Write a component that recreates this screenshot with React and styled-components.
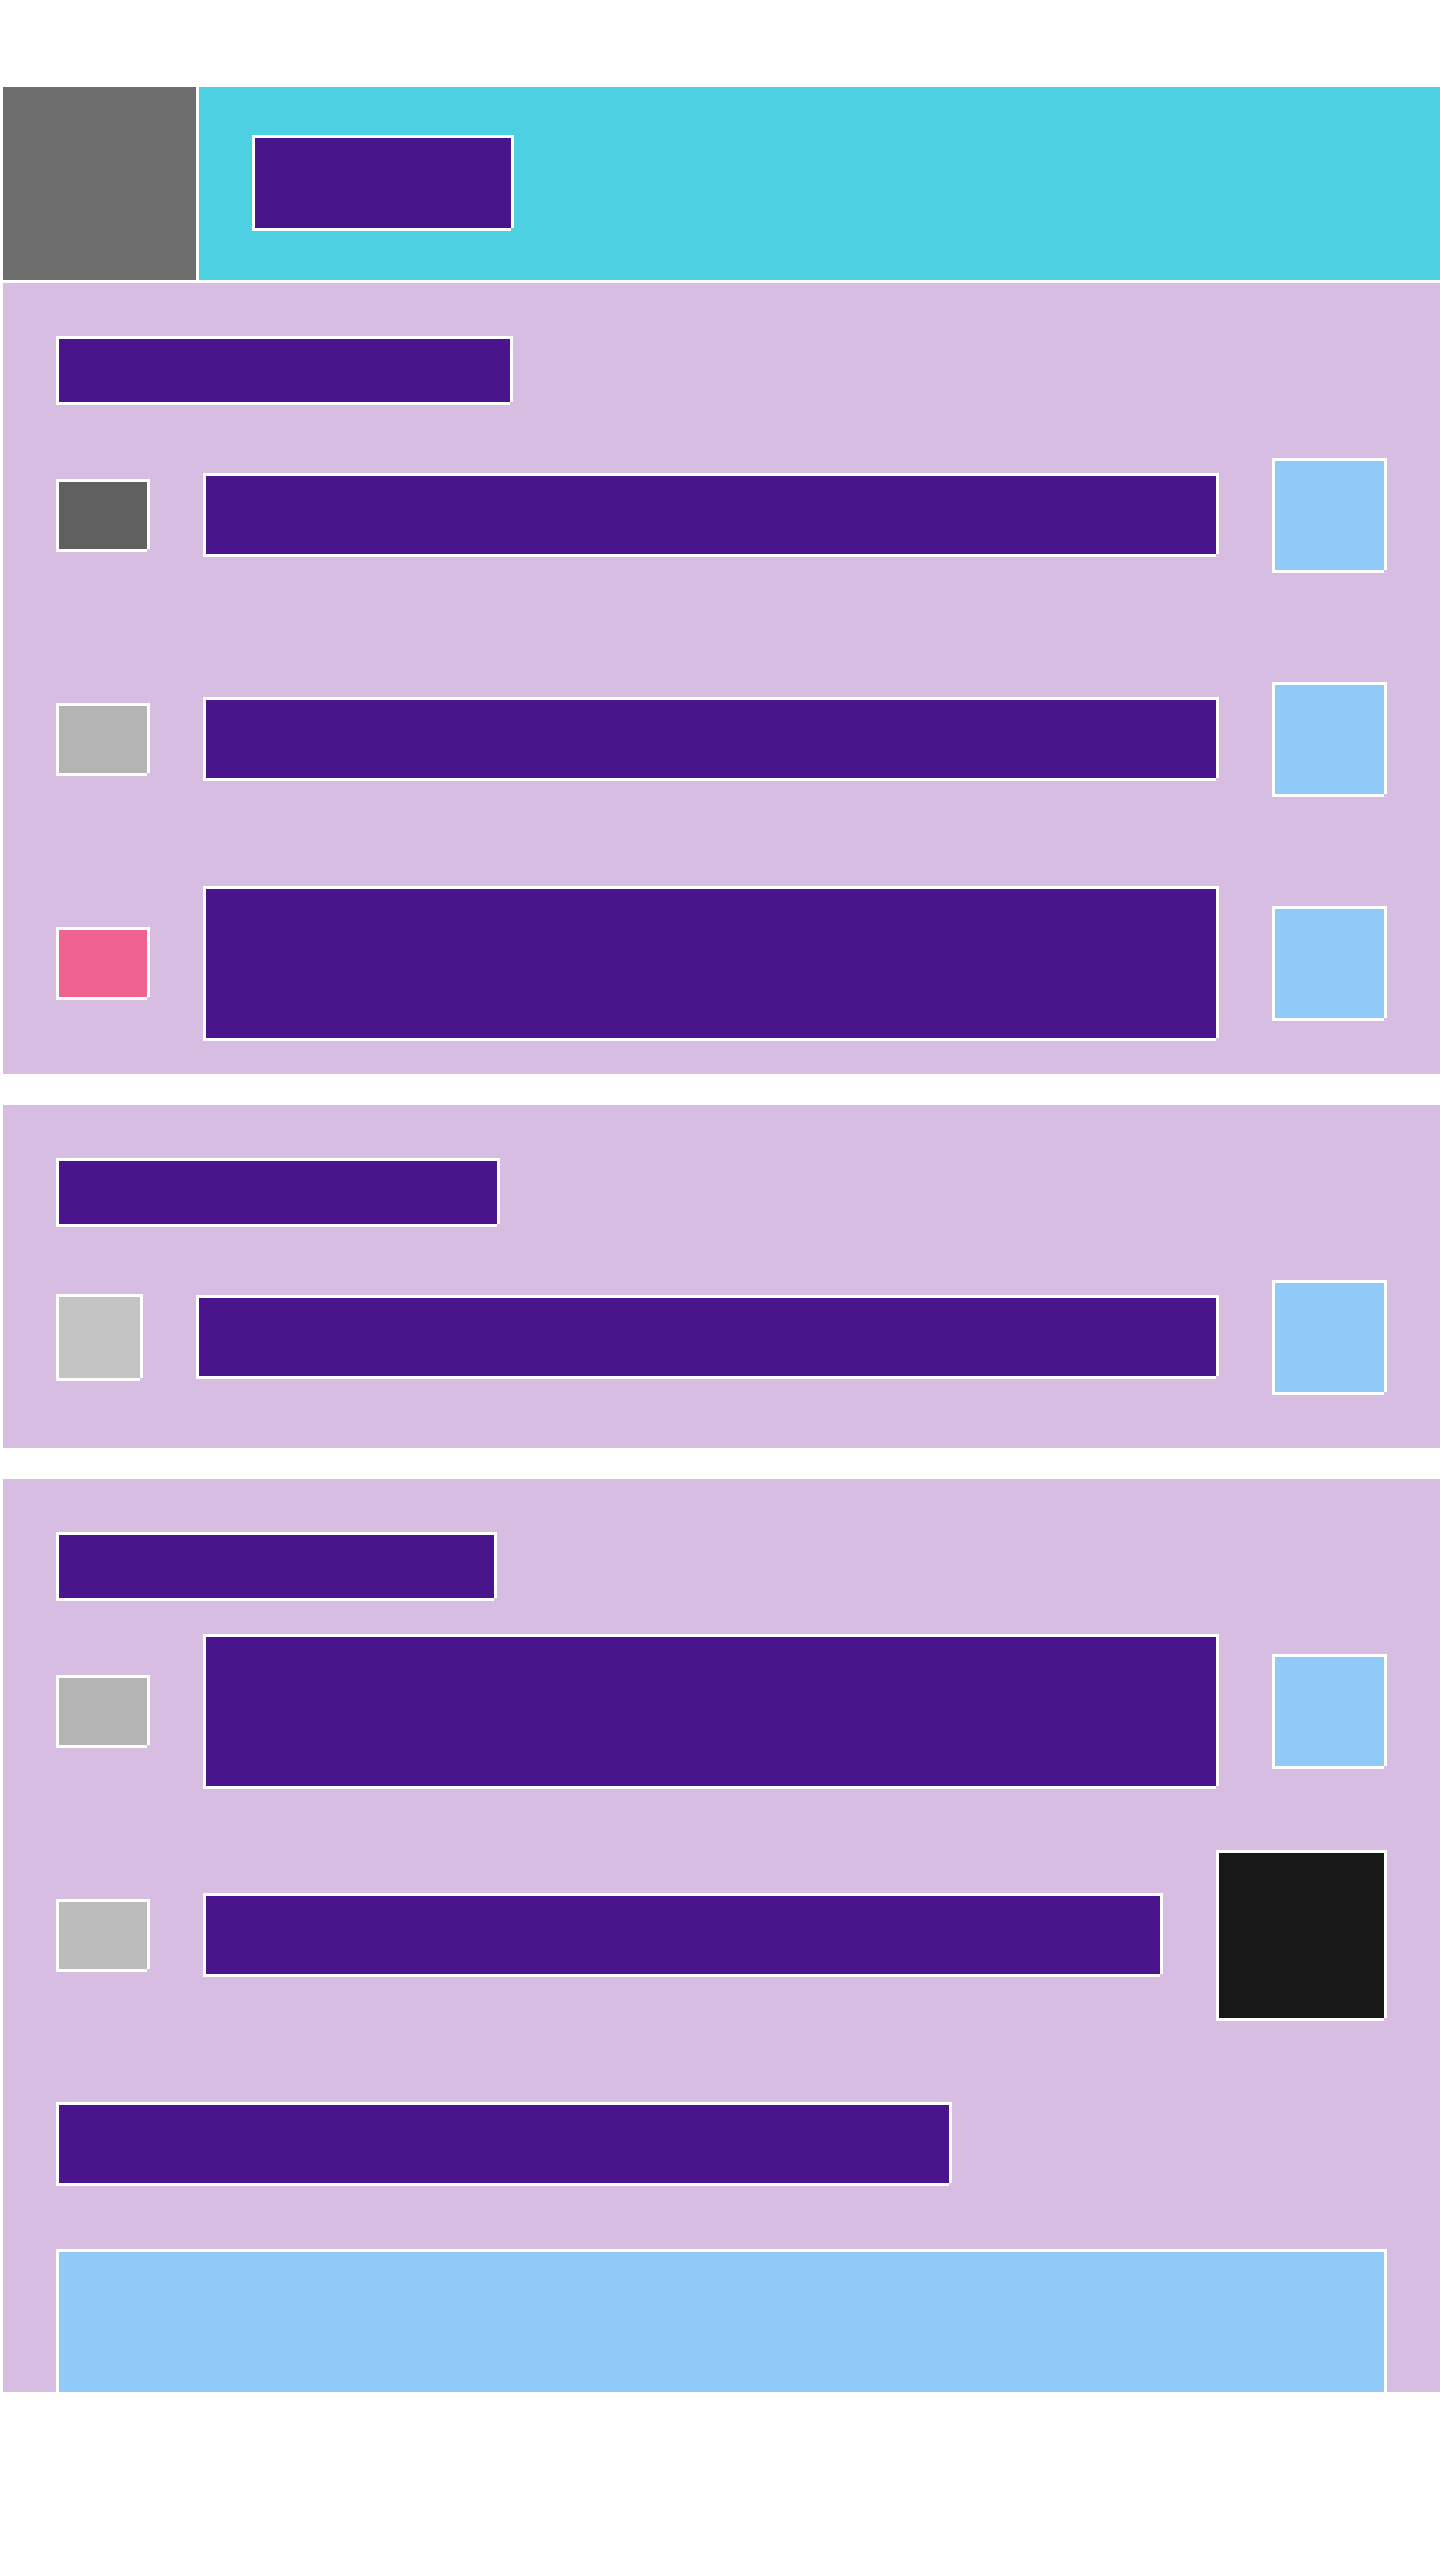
import React from "react";
import styled, { createGlobalStyle, css } from "styled-components";

const colors = {
  page: "#ffffff",
  bar: "#4dd0e1",
  panel: "#d7bde2",
  text: "#4a148c",
  action: "#90caf9",
};

const GlobalStyle = createGlobalStyle`
  *, *::before, *::after { box-sizing: border-box; }
  body {
    margin: 0;
    background: ${colors.page};
    font-family: Roboto, "Liberation Sans", sans-serif;
  }
`;

/* White rule on all four sides; the bottom right corner stays open. */
const outlined = css`
  border: 0 solid ${colors.page};
  border-width: 3px 0 0 3px;
  box-shadow: 3px 0 0 ${colors.page}, 0 3px 0 ${colors.page};
`;

const Page = styled.div`
  padding: 84px 0 168px;
`;

const TopBar = styled.header`
  display: flex;
  align-items: center;
  gap: 56px;
  border-top: 3px solid ${colors.page};
  background: ${colors.bar};
`;

const NavIcon = styled.div`
  width: 196px;
  height: 193px;
  border-left: 3px solid ${colors.page};
  box-shadow: 3px 0 0 ${colors.page};
  background: #6e6e6e;
`;

const Title = styled.div`
  ${outlined}
  width: 259px;
  height: 93px;
  margin-bottom: 4px;
  background: ${colors.text};
`;

const Sections = styled.main`
  display: flex;
  flex-direction: column;
  gap: 28px;
`;

const Section = styled.section`
  overflow: hidden;
  padding: 53px 56px 0 53px;
  border: 0 solid ${colors.page};
  border-width: 3px 0 0 3px;
  background: ${colors.panel};
`;

const Heading = styled.div`
  ${outlined}
  width: ${({ $width }) => $width}px;
  max-width: 100%;
  height: 66px;
  background: ${colors.text};
`;

const Rows = styled.ul`
  margin: 0;
  padding: 0;
  list-style: none;
`;

const Row = styled.li`
  display: flex;
  align-items: center;
  gap: 56px;
  height: 224px;
`;

const iconSizes = {
  wide: { width: 91, height: 70 },
  square: { width: 84, height: 84 },
};

const RowIcon = styled.div`
  ${outlined}
  flex: none;
  width: ${({ $shape }) => iconSizes[$shape].width}px;
  height: ${({ $shape }) => iconSizes[$shape].height}px;
  background: ${({ $color }) => $color};
`;

const Label = styled.div`
  ${outlined}
  background: ${colors.text};
  ${({ $lines }) =>
    $lines === 2
      ? css`
          height: 152px;
        `
      : css`
          height: 81px;
          margin-bottom: 1px;
        `}
`;

const RowLabel = styled(Label)`
  flex: 1;
  min-width: 0;
`;

const RowAction = styled.div`
  ${outlined}
  flex: none;
  width: ${({ $large }) => ($large ? 168 : 112)}px;
  height: ${({ $large }) => ($large ? 168 : 112)}px;
  background: ${({ $large }) => ($large ? "#181818" : colors.action)};
`;

const Field = styled.div`
  display: flex;
  flex-direction: column;
  gap: 65px;
  padding-top: 56px;
`;

const FieldLabel = styled(Label)`
  width: 893px;
  max-width: 100%;
`;

const FieldBox = styled.div`
  ${outlined}
  height: 143px;
  background: ${colors.action};
`;

const sections = [
  {
    id: "first",
    headingWidth: 454,
    rows: [
      { color: "#606060", shape: "wide", lines: 1 },
      { color: "#b4b4b4", shape: "wide", lines: 1 },
      { color: "#f06292", shape: "wide", lines: 2 },
    ],
  },
  {
    id: "second",
    headingWidth: 441,
    rows: [{ color: "#c4c4c4", shape: "square", lines: 1 }],
  },
  {
    id: "third",
    headingWidth: 438,
    rows: [
      { color: "#b4b4b4", shape: "wide", lines: 2 },
      { color: "#bcbcbc", shape: "wide", lines: 1, large: true },
    ],
    field: true,
  },
];

export default function App() {
  return (
    <>
      <GlobalStyle />
      <Page>
        <TopBar>
          <NavIcon />
          <Title />
        </TopBar>
        <Sections>
          {sections.map((section) => (
            <Section key={section.id}>
              <Heading $width={section.headingWidth} />
              <Rows>
                {section.rows.map((row, index) => (
                  <Row key={index}>
                    <RowIcon $shape={row.shape} $color={row.color} />
                    <RowLabel $lines={row.lines} />
                    <RowAction $large={row.large} />
                  </Row>
                ))}
              </Rows>
              {section.field && (
                <Field>
                  <FieldLabel $lines={1} />
                  <FieldBox />
                </Field>
              )}
            </Section>
          ))}
        </Sections>
      </Page>
    </>
  );
}
